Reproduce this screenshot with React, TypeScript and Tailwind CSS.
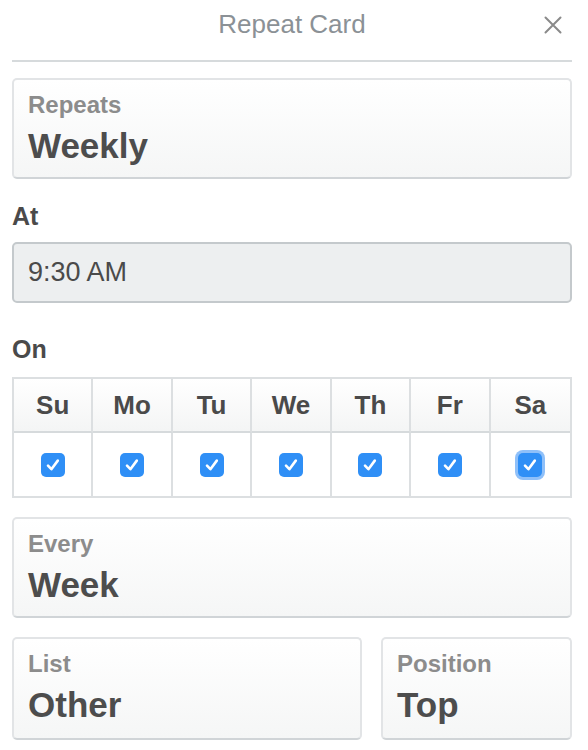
const days = ['Su', 'Mo', 'Tu', 'We', 'Th', 'Fr', 'Sa'];

const Field = ({ label, value, className = '' }: { label: string; value: string; className?: string }) => (
  <div
    className={`h-[101px] rounded-[5px] border-2 border-[#e2e4e6] border-b-[#d0d4d7] bg-gradient-to-b from-white to-[#f5f6f6] px-[14px] pt-[11px] ${className}`}
  >
    <div className="text-[24px] font-bold leading-[28px] text-[#8c8c8c]">{label}</div>
    <div className="mt-[7px] text-[35px] font-bold leading-[40px] text-[#4d4d4d]">{value}</div>
  </div>
);

const Check = ({ focused }: { focused?: boolean }) => (
  <span
    className={`flex h-[24px] w-[24px] items-center justify-center rounded-[5px] bg-[#2f8ff6] ${
      focused ? 'ring-[3px] ring-[#8fc0f9]' : ''
    }`}
  >
    <svg width="24" height="24" viewBox="0 0 24 24" fill="none">
      <path d="M7 12.6l3.4 3.6 6.4-8.6" stroke="white" strokeWidth="2.6" strokeLinecap="round" strokeLinejoin="round" />
    </svg>
  </span>
);

export default function App() {
  return (
    <div className="w-[588px] h-[750px] overflow-hidden bg-white pl-3 pr-4 font-['Liberation_Sans',Arial,sans-serif] text-[#4a4a4a]">
      {/* Header */}
      <div className="relative h-[62px] border-b-2 border-[#d6dadc] pt-[9px] text-center">
        <span className="text-[26px] leading-[30px] text-[#8b9196]">Repeat Card</span>
        <svg
          className="absolute right-[10px] top-[16px]"
          width="18"
          height="18"
          viewBox="0 0 18 18"
          fill="none"
          stroke="#8a8a8a"
          strokeWidth="2"
          strokeLinecap="round"
        >
          <path d="M1.5 1.5l15 15M16.5 1.5l-15 15" />
        </svg>
      </div>

      <Field label="Repeats" value="Weekly" className="mt-[16px]" />

      <div className="mt-[23px] text-[25px] font-bold leading-[28px]">At</div>
      <div className="mt-[12px] flex h-[61px] items-center rounded-[5px] border-2 border-[#c4c9cc] bg-[#edeff0] px-[14px] text-[27px]">
        9:30 AM
      </div>

      <div className="mt-[32px] text-[25px] font-bold leading-[28px]">On</div>
      <div className="mt-[14px] grid grid-cols-7 border-2 border-[#dcdfe1]">
        {days.map((d, i) => (
          <div
            key={d}
            className={`flex h-[54px] items-center justify-center border-b-2 border-[#d6dadc] bg-gradient-to-b from-white to-[#f4f5f5] text-[26px] font-bold ${
              i < 6 ? 'border-r-2 border-r-[#dcdfe1]' : ''
            }`}
          >
            {d}
          </div>
        ))}
        {days.map((d, i) => (
          <div
            key={d + 'c'}
            className={`flex h-[63px] items-center justify-center bg-white ${i < 6 ? 'border-r-2 border-r-[#dcdfe1]' : ''}`}
          >
            <Check focused={i === 6} />
          </div>
        ))}
      </div>

      <Field label="Every" value="Week" className="mt-[19px]" />

      <div className="mt-[19px] flex gap-[19px]">
        <Field label="List" value="Other" className="h-[103px] flex-1" />
        <Field label="Position" value="Top" className="h-[103px] w-[191px]" />
      </div>
    </div>
  );
}
